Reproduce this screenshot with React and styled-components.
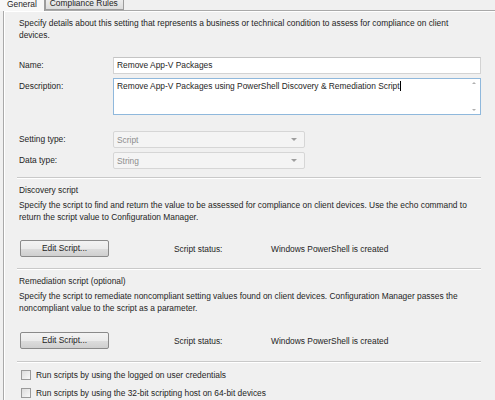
import React from "react";
import styled, { createGlobalStyle } from "styled-components";

const GlobalStyle = createGlobalStyle`
  html, body {
    margin: 0;
    padding: 0;
    background: #f0f0f0;
    width: 495px;
    height: 400px;
    overflow: hidden;
  }
  body {
    font-family: "Liberation Sans", Arial, sans-serif;
    font-size: 8.4px;
    color: #1e1e1e;
  }
`;

const Window = styled.div`
  width: 495px;
  height: 400px;
  display: flex;
  flex-direction: column;
  background: #f0f0f0;
`;

const TabStrip = styled.div`
  display: flex;
  align-items: flex-end;
  height: 10px;
`;

const Tab = styled.div`
  height: ${(p) => (p.$active ? "11px" : "10px")};
  box-sizing: border-box;
  padding: 0 ${(p) => (p.$active ? "7px" : "5px")} 0 ${(p) => (p.$active ? "7px" : "4px")};
  display: flex;
  align-items: flex-end;
  line-height: 10px;
  overflow: hidden;
  border: 1px solid #9c9c9c;
  border-top: none;
  border-bottom: ${(p) => (p.$active ? "none" : "1px solid #9c9c9c")};
  border-left: ${(p) => (p.$active ? "none" : "1px solid #9c9c9c")};
  background: ${(p) => (p.$active ? "#f7f7f7" : "linear-gradient(#ececec, #dcdcdc)")};
  position: relative;
  z-index: ${(p) => (p.$active ? 2 : 1)};
  margin-bottom: ${(p) => (p.$active ? "-1px" : "0")};
  span {
    position: relative;
    top: ${(p) => (p.$active ? "-2px" : "-1px")};
  }
`;

const TabFill = styled.div`
  flex: 1;
  height: 0;
`;

const Panel = styled.div`
  flex: 1;
  margin-left: 3px;
  border-top: 1px solid #a9a9a9;
  border-left: 1px solid #a9a9a9;
  box-shadow: inset 1px 1px 0 #ffffff;
  padding: 6px 0 0 15px;
  display: flex;
  flex-direction: column;
`;

const Para = styled.div`
  line-height: 12px;
  margin-top: ${(p) => p.$mt || 0}px;
  white-space: nowrap;
`;

const FormRow = styled.div`
  display: grid;
  grid-template-columns: 94px ${(p) => p.$w || 368}px;
  align-items: start;
  margin-top: ${(p) => p.$mt || 0}px;
`;

const Label = styled.div`
  line-height: 17px;
`;

const TextBox = styled.div`
  height: 17px;
  box-sizing: border-box;
  border: 1px solid #d3d3d3;
  border-top-color: #c4c4c4;
  background: #fff;
  padding-left: 3px;
  line-height: 15px;
  white-space: nowrap;
  overflow: hidden;
`;

const TextArea = styled.div`
  height: 37px;
  box-sizing: border-box;
  border: 1px solid #8fb8dc;
  background: #fff;
  display: flex;
`;

const AreaText = styled.div`
  flex: 1;
  padding: 1px 0 0 3px;
  line-height: 12px;
  white-space: nowrap;
`;

const Caret = styled.span`
  display: inline-block;
  width: 1px;
  height: 10px;
  background: #000;
  vertical-align: -2px;
`;

const ScrollBar = styled.div`
  width: 12px;
  display: flex;
  flex-direction: column;
  justify-content: space-between;
  align-items: center;
  padding: 3px 0;
  box-sizing: border-box;
`;

const Arrow = styled.div`
  width: 0;
  height: 0;
  border-left: 2px solid transparent;
  border-right: 2px solid transparent;
  ${(p) =>
    p.$up ? "border-bottom: 2px solid #b0b0b0;" : "border-top: 2px solid #b0b0b0;"}
`;

const Select = styled.div`
  height: 17px;
  box-sizing: border-box;
  border: 1px solid #d6d6d6;
  border-radius: 2px;
  background: #f4f4f4;
  color: #8d8d8d;
  display: flex;
  align-items: center;
  justify-content: space-between;
  padding: 0 7px 0 3px;
`;

const DropArrow = styled.div`
  width: 0;
  height: 0;
  border-left: 3px solid transparent;
  border-right: 3px solid transparent;
  border-top: 3px solid #9e9e9e;
`;

const Separator = styled.div`
  height: 0;
  width: 464px;
  margin-left: -2px;
  border-top: 1px solid #c9c9c9;
  border-bottom: 1px solid #ffffff;
  margin-top: ${(p) => p.$mt || 0}px;
`;

const ScriptRow = styled.div`
  display: flex;
  align-items: center;
  margin-top: ${(p) => p.$mt || 0}px;
  height: 17px;
`;

const Button = styled.button`
  width: 89px;
  height: 17px;
  margin-left: 1px;
  box-sizing: border-box;
  border: 1px solid #8a8a8a;
  border-radius: 2px;
  background: linear-gradient(#f3f3f3 0%, #ebebeb 50%, #dddddd 51%, #cfcfcf 100%);
  font: inherit;
  color: #1e1e1e;
  padding: 0;
  line-height: 15px;
`;

const StatusLabel = styled.div`
  margin-left: 65px;
  width: 97px;
`;

const CheckRow = styled.label`
  display: flex;
  align-items: center;
  height: 18px;
  margin-top: ${(p) => p.$mt || 0}px;
`;

const Box = styled.span`
  width: 10px;
  height: 10px;
  box-sizing: border-box;
  border: 1px solid #9a9a9a;
  background: linear-gradient(135deg, #dcdcdc, #f8f8f8);
  margin: 0 5px 0 2px;
`;

export default function App() {
  return (
    <Window>
      <GlobalStyle />
      <TabStrip>
        <Tab $active>
          <span>General</span>
        </Tab>
        <Tab>
          <span>Compliance Rules</span>
        </Tab>
        <TabFill />
      </TabStrip>
      <Panel>
        <Para>
          Specify details about this setting that represents a business or technical condition to assess for compliance on client
          <br />
          devices.
        </Para>

        <FormRow $mt={16}>
          <Label>Name:</Label>
          <TextBox>Remove App-V Packages</TextBox>
        </FormRow>
        <FormRow $mt={4}>
          <Label>Description:</Label>
          <TextArea>
            <AreaText>
              Remove App-V Packages using PowerShell Discovery &amp; Remediation Script
              <Caret />
            </AreaText>
            <ScrollBar>
              <Arrow $up />
              <Arrow />
            </ScrollBar>
          </TextArea>
        </FormRow>

        <FormRow $mt={16} $w={192}>
          <Label>Setting type:</Label>
          <Select>
            Script
            <DropArrow />
          </Select>
        </FormRow>
        <FormRow $mt={4} $w={192}>
          <Label>Data type:</Label>
          <Select>
            String
            <DropArrow />
          </Select>
        </FormRow>

        <Separator $mt={8} />
        <Para $mt={5}>Discovery script</Para>
        <Para $mt={3}>
          Specify the script to find and return the value to be assessed for compliance on client devices. Use the echo command to
          <br />
          return the script value to Configuration Manager.
        </Para>
        <ScriptRow $mt={17}>
          <Button>Edit Script...</Button>
          <StatusLabel>Script status:</StatusLabel>
          <div>Windows PowerShell is created</div>
        </ScriptRow>

        <Separator $mt={11} />
        <Para $mt={5}>Remediation script (optional)</Para>
        <Para $mt={3}>
          Specify the script to remediate noncompliant setting values found on client devices. Configuration Manager passes the
          <br />
          noncompliant value to the script as a parameter.
        </Para>
        <ScriptRow $mt={18}>
          <Button>Edit Script...</Button>
          <StatusLabel>Script status:</StatusLabel>
          <div>Windows PowerShell is created</div>
        </ScriptRow>

        <Separator $mt={12} />
        <CheckRow $mt={3}>
          <Box />
          Run scripts by using the logged on user credentials
        </CheckRow>
        <CheckRow>
          <Box />
          Run scripts by using the 32-bit scripting host on 64-bit devices
        </CheckRow>
      </Panel>
    </Window>
  );
}
